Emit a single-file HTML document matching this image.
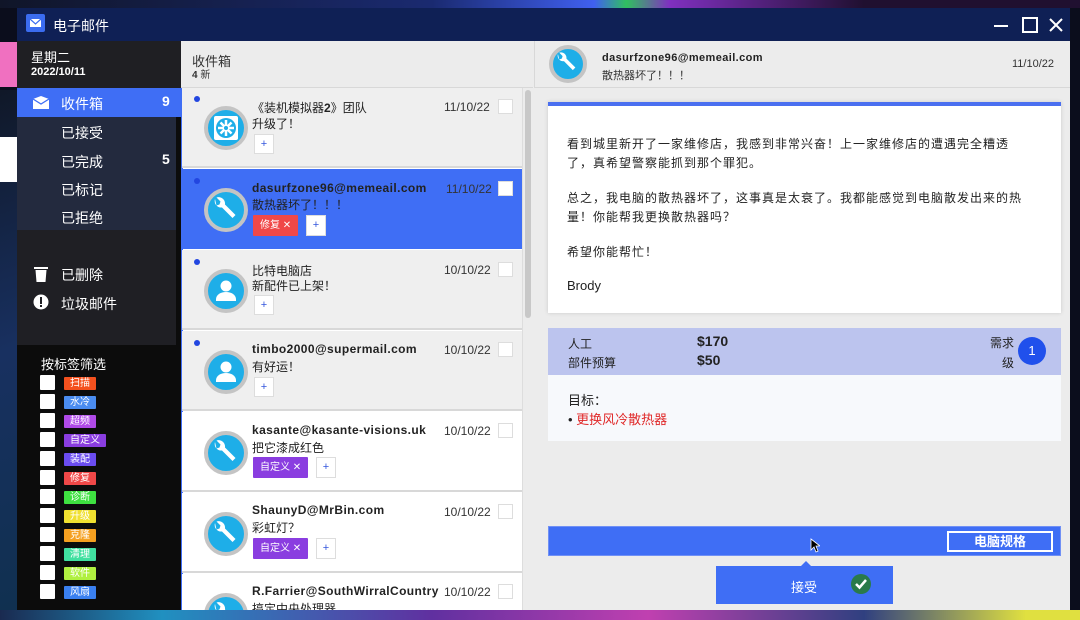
<!DOCTYPE html>
<html><head><meta charset="utf-8"><style>
*{margin:0;padding:0;box-sizing:border-box}
body{width:1080px;height:620px;overflow:hidden;background:#0b0d1c;font-family:"Liberation Sans","Noto Sans CJK SC",sans-serif;position:relative}
.abs{position:absolute;white-space:nowrap}
.bg1{left:0;top:0;width:1080px;height:8px;background:linear-gradient(90deg,#101528 0%,#1a2a70 40%,#4060f0 55%,#30c060 58%,#8030c0 62%,#201030 80%)}
.bg2{left:0;top:610px;width:1080px;height:10px;background:linear-gradient(90deg,#1a2a50 0%,#2090c0 15%,#6030a0 40%,#c040b0 60%,#304080 80%,#e0e040 95%)}
.win{left:17px;top:8px;width:1053px;height:602px;background:#ececec}
.title{left:17px;top:8px;width:1053px;height:33px;background:#0f2055;color:#fff;font-size:14px}
.side{left:17px;top:41px;width:164px;height:569px;background:#0c0c0c}
.cb{width:15px;height:15px;background:#fff;border-radius:1px}
.tag{height:13px;font-size:10px;color:#fff;line-height:13px;padding:0 6px;border-radius:1px}
.item{left:182px;width:340px;height:80px;border-bottom:2px solid #d8d8d8}
.av{width:44px;height:44px;border-radius:50%;background:#1eaee8;border:4px solid #c4c4c4}
.from{font-size:12px;font-weight:bold;color:#222;letter-spacing:.4px}
.sub{font-size:12px;color:#222}
.dt{font-size:12px;color:#333}
.ck{width:15px;height:15px;background:#fff;border:1px solid #ddd}
.plus{width:20px;height:20px;background:#fff;border:1px solid #ddd;color:#3355dd;font-size:11px;text-align:center;line-height:18px}
.dot{width:6px;height:6px;border-radius:50%;background:#2246e0}
.body p{white-space:normal}
</style></head><body>
<div class="abs bg1"></div><div class="abs bg2"></div>
<div class="abs" style="left:0;top:42px;width:17px;height:45px;background:#f070c0"></div>
<div class="abs" style="left:0;top:90px;width:17px;height:520px;background:linear-gradient(160deg,#101828,#183060 50%,#103050)"></div>
<div class="abs" style="left:0;top:137px;width:17px;height:45px;background:#fff"></div>
<div class="abs win"></div>
<div class="abs title">
 <div class="abs" style="left:9px;top:6px;width:19px;height:18px;background:#3b6cf0;border-radius:2px"><svg width="19" height="18"><rect x="4" y="5" width="11" height="8" fill="#fff"/><path d="M4 5 L9.5 10 L15 5" stroke="#3b6cf0" fill="none" stroke-width="1.2"/></svg></div>
 <div class="abs" style="left:36px;top:8px">电子邮件</div>
 <svg class="abs" style="left:975px;top:8px" width="75" height="20"><path d="M2 10 H16" stroke="#fff" stroke-width="2"/><rect x="31" y="2" width="14" height="14" stroke="#fff" stroke-width="2" fill="none"/><path d="M58 3 L70 15 M70 3 L58 15" stroke="#fff" stroke-width="2"/></svg>
</div>
<div class="abs side"></div>
<div class="abs" style="left:17px;top:41px;width:164px;height:47px;background:#1f1f23;color:#fff">
 <div class="abs" style="left:14px;top:9px;font-size:13px;line-height:16px">星期二</div>
 <div class="abs" style="left:14px;top:25px;font-size:11px;font-weight:bold;line-height:12px">2022/10/11</div>
</div>
<div class="abs" style="left:17px;top:88px;width:165px;height:29px;background:#3f6ef5;color:#fff">
 <svg class="abs" style="left:16px;top:8px" width="16" height="13"><path d="M0 3 L8 0 L16 3 V13 H0Z" fill="#fff"/><path d="M0 3 L8 8 L16 3" stroke="#3f6ef5" fill="none" stroke-width="1.3"/></svg>
 <div class="abs" style="left:44px;top:6px;font-size:14px">收件箱</div>
 <div class="abs" style="left:145px;top:5px;font-size:14px;font-weight:bold">9</div>
</div>
<div class="abs" style="left:17px;top:117px;width:159px;height:113px;background:#232a3e;color:#fff;font-size:14px">
 <div class="abs" style="left:44px;top:6px">已接受</div>
 <div class="abs" style="left:44px;top:35px">已完成</div>
 <div class="abs" style="left:145px;top:34px;font-weight:bold">5</div>
 <div class="abs" style="left:44px;top:63px">已标记</div>
 <div class="abs" style="left:44px;top:91px">已拒绝</div>
</div>
<div class="abs" style="left:17px;top:230px;width:159px;height:115px;background:#1f1f24;color:#fff;font-size:14px">
 <svg class="abs" style="left:17px;top:36px" width="14" height="16"><rect x="0" y="1" width="14" height="2" fill="#fff"/><path d="M1.5 4 H12.5 L11.5 16 H2.5Z" fill="#fff"/></svg>
 <div class="abs" style="left:44px;top:35px">已删除</div>
 <svg class="abs" style="left:16px;top:64px" width="16" height="16"><circle cx="8" cy="8" r="7.5" fill="#fff"/><rect x="7" y="3" width="2" height="7" fill="#1f1f24"/><rect x="7" y="11" width="2" height="2" fill="#1f1f24"/></svg>
 <div class="abs" style="left:44px;top:64px">垃圾邮件</div>
</div>
<div class="abs" style="left:41px;top:354px;color:#fff;font-size:13px">按标签筛选</div>
<div class="abs" style="left:40px;top:375px">
 <div class="abs cb" style="top:0"></div><div class="abs tag" style="left:24px;top:2px;background:#f4511e">扫描</div>
 <div class="abs cb" style="top:19px"></div><div class="abs tag" style="left:24px;top:21px;background:#4a8cf0">水冷</div>
 <div class="abs cb" style="top:38px"></div><div class="abs tag" style="left:24px;top:40px;background:#b04ae8">超频</div>
 <div class="abs cb" style="top:57px"></div><div class="abs tag" style="left:24px;top:59px;background:#8a3de0">自定义</div>
 <div class="abs cb" style="top:76px"></div><div class="abs tag" style="left:24px;top:78px;background:#6a4cf0">装配</div>
 <div class="abs cb" style="top:95px"></div><div class="abs tag" style="left:24px;top:97px;background:#f04848">修复</div>
 <div class="abs cb" style="top:114px"></div><div class="abs tag" style="left:24px;top:116px;background:#3ee040">诊断</div>
 <div class="abs cb" style="top:133px"></div><div class="abs tag" style="left:24px;top:135px;background:#f0e030">升级</div>
 <div class="abs cb" style="top:152px"></div><div class="abs tag" style="left:24px;top:154px;background:#f5a020">克隆</div>
 <div class="abs cb" style="top:171px"></div><div class="abs tag" style="left:24px;top:173px;background:#40e0a0">清理</div>
 <div class="abs cb" style="top:190px"></div><div class="abs tag" style="left:24px;top:192px;background:#b0f040">软件</div>
 <div class="abs cb" style="top:209px"></div><div class="abs tag" style="left:24px;top:211px;background:#3a80f0">风扇</div>
</div>
<!-- list -->
<div class="abs" style="left:181px;top:41px;width:352px;height:569px;background:#fff"></div>
<div class="abs" style="left:181px;top:41px;width:352px;height:47px;background:#ececec;border-bottom:1px solid #d8d8d8">
 <div class="abs" style="left:11px;top:10px;font-size:13px;color:#333">收件箱</div>
 <div class="abs" style="left:11px;top:25px;font-size:10px;color:#333"><b>4</b> 新</div>
</div>
<div class="abs" style="left:181px;top:88px;width:2px;height:522px;background:#3f6ef5"></div>
<div class="abs" style="left:522px;top:88px;width:11px;height:522px;background:#ececec;border-left:1px solid #ddd"><div class="abs" style="left:2px;top:2px;width:6px;height:228px;background:#c8c8c8;border-radius:3px"></div></div>

<div class="abs item" style="top:88px;background:#efefef">
 <div class="abs dot" style="left:12px;top:8px"></div>
 <div class="abs av" style="left:22px;top:18px;background:#1eaee8"><svg width="36" height="36"><rect x="6" y="6" width="24" height="24" fill="#fff" rx="2"/><circle cx="18" cy="18" r="10" fill="#1eaee8"/><g stroke="#fff" stroke-width="2.5"><path d="M18 10 V26 M10 18 H26 M12.5 12.5 L23.5 23.5 M23.5 12.5 L12.5 23.5"/></g><circle cx="18" cy="18" r="2" fill="#1eaee8"/></svg></div>
 <div class="abs sub" style="left:70px;top:11px">《装机模拟器<b>2</b>》团队</div>
 <div class="abs sub" style="left:70px;top:27px">升级了！</div>
 <div class="abs plus" style="left:72px;top:46px">+</div>
 <div class="abs dt" style="left:262px;top:12px">11/10/22</div>
 <div class="abs ck" style="left:316px;top:11px"></div>
</div>
<svg width="0" height="0" style="position:absolute"><defs><path id="wr" d="M7 7 a6.5 6.5 0 0 0 7 8.5 L24.5 26 l3 -3 L17 12.5 a6.5 6.5 0 0 0 -8.5 -7 l4 4 -1 3 -3 1z" fill="#fff"/></defs></svg>
<div class="abs item" style="top:169px;background:#3f6ef5;border-bottom-color:#3f6ef5">
 <div class="abs dot" style="left:12px;top:9px"></div>
 <div class="abs av" style="left:22px;top:19px"><svg width="36" height="36"><use href="#wr"/></svg></div>
 <div class="abs from" style="left:70px;top:12px">dasurfzone96@memeail.com</div>
 <div class="abs sub" style="left:70px;top:27px">散热器坏了！！！</div>
 <div class="abs tag" style="left:71px;top:46px;height:21px;line-height:21px;background:#f04848;padding:0 7px">修复 ✕</div>
 <div class="abs plus" style="left:124px;top:46px;height:21px">+</div>
 <div class="abs dt" style="left:264px;top:13px">11/10/22</div>
 <div class="abs ck" style="left:316px;top:12px"></div>
</div>
<div class="abs item" style="top:250px;background:#efefef">
 <div class="abs dot" style="left:12px;top:9px"></div>
 <div class="abs av" style="left:22px;top:19px"><svg width="36" height="36"><circle cx="18" cy="13" r="5.5" fill="#fff"/><path d="M8 26 a10 7 0 0 1 20 0 v2 h-20z" fill="#fff"/></svg></div>
 <div class="abs sub" style="left:70px;top:12px">比特电脑店</div>
 <div class="abs sub" style="left:70px;top:27px">新配件已上架！</div>
 <div class="abs plus" style="left:72px;top:45px">+</div>
 <div class="abs dt" style="left:262px;top:13px">10/10/22</div>
 <div class="abs ck" style="left:316px;top:12px"></div>
</div>
<div class="abs item" style="top:331px;background:#efefef">
 <div class="abs dot" style="left:12px;top:9px"></div>
 <div class="abs av" style="left:22px;top:19px"><svg width="36" height="36"><circle cx="18" cy="13" r="5.5" fill="#fff"/><path d="M8 26 a10 7 0 0 1 20 0 v2 h-20z" fill="#fff"/></svg></div>
 <div class="abs from" style="left:70px;top:11px">timbo2000@supermail.com</div>
 <div class="abs sub" style="left:70px;top:27px">有好运！</div>
 <div class="abs plus" style="left:72px;top:46px">+</div>
 <div class="abs dt" style="left:262px;top:12px">10/10/22</div>
 <div class="abs ck" style="left:316px;top:11px"></div>
</div>
<div class="abs item" style="top:412px;background:#fff">
 <div class="abs av" style="left:22px;top:19px"><svg width="36" height="36"><use href="#wr"/></svg></div>
 <div class="abs from" style="left:70px;top:11px">kasante@kasante-visions.uk</div>
 <div class="abs sub" style="left:70px;top:27px">把它漆成红色</div>
 <div class="abs tag" style="left:71px;top:45px;height:21px;line-height:21px;background:#8a3de0;padding:0 7px">自定义 ✕</div>
 <div class="abs plus" style="left:134px;top:45px;height:21px">+</div>
 <div class="abs dt" style="left:262px;top:12px">10/10/22</div>
 <div class="abs ck" style="left:316px;top:11px"></div>
</div>
<div class="abs item" style="top:493px;background:#fff">
 <div class="abs av" style="left:22px;top:19px"><svg width="36" height="36"><use href="#wr"/></svg></div>
 <div class="abs from" style="left:70px;top:10px">ShaunyD@MrBin.com</div>
 <div class="abs sub" style="left:70px;top:26px">彩虹灯？</div>
 <div class="abs tag" style="left:71px;top:45px;height:21px;line-height:21px;background:#8a3de0;padding:0 7px">自定义 ✕</div>
 <div class="abs plus" style="left:134px;top:45px;height:21px">+</div>
 <div class="abs dt" style="left:262px;top:12px">10/10/22</div>
 <div class="abs ck" style="left:316px;top:11px"></div>
</div>
<div class="abs item" style="top:574px;height:36px;background:#fff;border:none;overflow:hidden">
 <div class="abs av" style="left:22px;top:19px"><svg width="36" height="36"><use href="#wr"/></svg></div>
 <div class="abs from" style="left:70px;top:10px;width:192px;overflow:hidden">R.Farrier@SouthWirralCountry</div>
 <div class="abs sub" style="left:70px;top:26px">搞定中央处理器</div>
 <div class="abs dt" style="left:262px;top:11px">10/10/22</div>
 <div class="abs ck" style="left:316px;top:10px"></div>
</div>
<!-- right -->
<div class="abs" style="left:534px;top:41px;width:536px;height:47px;border-bottom:1px solid #d8d8d8;border-left:1px solid #d8d8d8">
 <div class="abs av" style="left:14px;top:4px;width:38px;height:38px"><svg width="30" height="30"><g transform="translate(-1,-1) scale(0.85)"><use href="#wr"/></g></svg></div>
 <div class="abs from" style="left:67px;top:11px;font-size:11px">dasurfzone96@memeail.com</div>
 <div class="abs" style="left:67px;top:26px;font-size:11px;color:#333">散热器坏了！！！</div>
 <div class="abs dt" style="left:477px;top:17px;font-size:11px">11/10/22</div>
</div>
<div class="abs body" style="left:548px;top:102px;width:513px;height:211px;background:#fff;border-top:4px solid #4a6ff0;box-shadow:0 0 4px rgba(0,0,0,.15);font-size:12px;color:#222;line-height:19px;letter-spacing:1px">
 <p class="abs" style="left:19px;top:29px;width:458px">看到城里新开了一家维修店，我感到非常兴奋！上一家维修店的遭遇完全糟透了，真希望警察能抓到那个罪犯。</p>
 <p class="abs" style="left:19px;top:83px;width:472px">总之，我电脑的散热器坏了，这事真是太衰了。我都能感觉到电脑散发出来的热量！你能帮我更换散热器吗？</p>
 <p class="abs" style="left:19px;top:137px">希望你能帮忙！</p>
 <p class="abs" style="left:19px;top:170px;font-size:13px;letter-spacing:0">Brody</p>
</div>
<div class="abs" style="left:548px;top:328px;width:513px;height:47px;background:#bcc4ee;font-size:12px;color:#222">
 <div class="abs" style="left:20px;top:7px">人工</div>
 <div class="abs" style="left:20px;top:26px">部件预算</div>
 <div class="abs" style="left:149px;top:5px;font-size:14px;font-weight:bold">$170</div>
 <div class="abs" style="left:149px;top:24px;font-size:14px;font-weight:bold">$50</div>
 <div class="abs" style="left:436px;top:5px;width:30px;text-align:right;line-height:20px">需求<br>级</div>
 <div class="abs" style="left:470px;top:9px;width:28px;height:28px;border-radius:50%;background:#2050ec;color:#fff;text-align:center;line-height:28px;font-size:13px">1</div>
</div>
<div class="abs" style="left:548px;top:375px;width:513px;height:66px;background:#f7f9fc;font-size:13px">
 <div class="abs" style="left:20px;top:15px;color:#222">目标：</div>
 <div class="abs" style="left:20px;top:34px;color:#222">• <span style="color:#e02828">更换风冷散热器</span></div>
</div>
<div class="abs" style="left:548px;top:526px;width:513px;height:30px;background:#3f6ef5;border:1px solid #7090f5">
 <div class="abs" style="left:398px;top:4px;width:106px;height:21px;border:2px solid #fff;color:#fff;font-size:13px;text-align:center;line-height:17px;font-weight:bold">电脑规格</div>
</div>
<svg class="abs" style="left:810px;top:538px" width="10" height="15"><path d="M1 1 V12 L4 9 L6 14 L8 13 L6 8 H10Z" fill="#000" stroke="#fff" stroke-width=".8"/></svg>
<div class="abs" style="left:800px;top:561px;width:0;height:0;border-left:6px solid transparent;border-right:6px solid transparent;border-bottom:6px solid #3f6ef5"></div>
<div class="abs" style="left:716px;top:566px;width:177px;height:38px;background:#3f6ef5;color:#fff;font-size:13px">
 <div class="abs" style="left:75px;top:11px">接受</div>
 <svg class="abs" style="left:135px;top:8px" width="20" height="20"><circle cx="10" cy="10" r="10" fill="#2a7a4a"/><path d="M5 10 L8.5 13.5 L15 6" stroke="#fff" stroke-width="2.5" fill="none"/></svg>
</div>
</body></html>
